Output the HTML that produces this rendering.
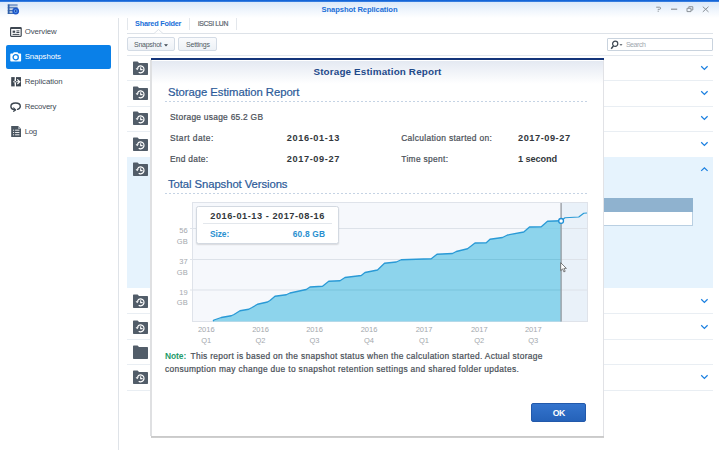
<!DOCTYPE html>
<html>
<head>
<meta charset="utf-8">
<title>Snapshot Replication</title>
<style>
*{box-sizing:border-box;margin:0;padding:0}
html,body{width:719px;height:460px;overflow:hidden;background:#fff}
body{font-family:"Liberation Sans",sans-serif;font-size:8px;color:#505a64;position:relative}
.abs{position:absolute}
.t{position:absolute;white-space:nowrap;line-height:10px;height:10px}
.b{font-weight:bold}
#topbar{left:0;top:0;width:719px;height:1.8px;background:linear-gradient(#1263d6 0,#1768da 65%,#7eaeea 100%)}
#titlebar{left:0;top:1.5px;width:719px;height:16.5px;background:linear-gradient(#dbe9f9,#f2f7fd 60%,#fff)}
#wtitle{left:0;width:719px;text-align:center;top:4.5px;color:#1a6fd8;font-weight:bold}
#vsep{left:118px;top:18px;width:1px;height:432px;background:#dfe3e8}
.side{left:24.7px;color:#414b55}
#sel{left:6px;top:44.5px;width:105px;height:24.5px;background:#0a80e8;border-radius:2px}
.tabsep{width:1px;top:18px;height:12px;background:#e3e7ec}
#tabline{left:127px;top:32.6px;width:586px;height:1px;background:#dde2e8}
.btn{height:13.5px;top:37.4px;border:1px solid #d3dbe5;border-radius:2px;background:linear-gradient(#fafbfd,#edf1f6)}
#tbline{left:127px;top:55px;width:586px;height:1px;background:#e3e8ee}
.rowsep{left:127px;width:586px;height:1px;background:#e9eef3}
#expanded{left:127px;top:156.5px;width:586px;height:131.9px;background:#e6f3fd}
.chev{left:700px;width:9px;height:6px}
.ico{left:133px;width:15px;height:14px}
#dlgshadow{left:150.2px;top:60.4px;width:1.9px;height:376px;background:#dfe0e2}
#dlgr{left:603.4px;top:60px;width:0.9px;height:376px;background:#e1e2e6}
#dlgb{left:151px;top:435.9px;width:453.2px;height:2.2px;background:linear-gradient(#dedede,#b2b2b2 55%,#f2f2f2)}
#dlg{left:152px;top:58.4px;width:451.5px;height:377.6px;background:#fff}
#dlgtop{left:151.2px;top:58.4px;width:452.6px;height:2px;background:#14357a}
#dlghead{left:152px;top:60.8px;width:451.5px;height:23px;background:linear-gradient(#e4e9f2,#fff)}
.dash{height:1px;background:repeating-linear-gradient(90deg,#c5d3e4 0,#c5d3e4 2px,transparent 2px,transparent 4px)}
.sec{color:#2b5a99;-webkit-text-stroke:0.2px #2b5a99;line-height:14px;height:14px}
.lbl{color:#4a5058;-webkit-text-stroke:0.22px #4a5058}
.val{color:#32373c;font-weight:bold}
.ax{color:#a3a8ad;font-size:7.5px;text-align:center;width:30px}
#okbtn{left:531.4px;top:403px;width:54.5px;height:18.6px;background:linear-gradient(#3474cd,#2562b9);border:1px solid #2259ab;border-radius:2px;color:#fff;font-weight:bold;text-align:center;font-size:8.7px;letter-spacing:-0.6px;line-height:18.2px}
</style>
</head>
<body>
<div class="abs" id="titlebar"></div>
<div class="abs" id="topbar"></div>
<div class="t" id="wtitle"><span id="wtitle_s" style="font-size:7.6px;letter-spacing:-0.086px;">Snapshot Replication</span></div>
<div class="abs" id="vsep"></div>
<div class="abs" id="sel"></div>
<div class="t side" id="s1" style="top:26.5px;font-size:7.8px;letter-spacing:-0.071px;">Overview</div>
<div class="t side" id="s2" style="top:51.9px;color:#fff;font-size:7.8px;letter-spacing:-0.07px;">Snapshots</div>
<div class="t side" id="s3" style="top:76.5px;font-size:7.8px;letter-spacing:-0.068px;">Replication</div>
<div class="t side" id="s4" style="top:101.5px;font-size:7.8px;letter-spacing:-0.177px;">Recovery</div>
<div class="t side" id="s5" style="top:126.6px;font-size:7.8px;letter-spacing:-0.358px;">Log</div>
<svg class="abs" style="left:7px;top:4px" width="13" height="11" viewBox="7 4 13 11"><rect x="7.8" y="4.5" width="9.8" height="9.4" fill="#c9d4e6"/><path d="M7.8,5H17.6M7.8,7.8H17.6M7.8,10.6H17.6M7.8,13.4H17.6" stroke="#3f6fb4" stroke-width="1.1"/><rect x="7.8" y="4.5" width="1.7" height="9.4" fill="#2f5fa8"/><circle cx="15.7" cy="11.1" r="3.4" fill="#1d55c8"/><circle cx="15.7" cy="11.1" r="1.9" fill="#5a98ec"/><path d="M15.1,9.9L16.9,11.1L15.1,12.3Z" fill="#0f2f8a"/></svg>
<svg class="abs" style="left:10px;top:27px" width="12" height="10" viewBox="0 0 12 10"><rect x="0.6" y="0.6" width="10.6" height="8.8" rx="0.8" fill="#fff" stroke="#3f4852" stroke-width="1.2"/><path d="M0.6,1.4H11.2" stroke="#3f4852" stroke-width="1.2"/><rect x="2.6" y="3.6" width="2.6" height="2.2" fill="#3f4852"/><path d="M6.4,3.9H9.4M6.4,5.5H9.4M2.6,7.4H9.4" stroke="#3f4852" stroke-width="1"/></svg>
<svg class="abs" style="left:10px;top:52px" width="12" height="10" viewBox="0 0 12 10"><path d="M0.3,2.2Q0.3,1.5 1,1.5H2.9L3.8,0.3H7.6L8.5,1.5H10.4Q11.1,1.5 11.1,2.2V8.7Q11.1,9.4 10.4,9.4H1Q0.3,9.4 0.3,8.7Z" fill="#fff"/><circle cx="5.7" cy="5.2" r="2.6" fill="none" stroke="#0a80e8" stroke-width="1.3"/></svg>
<svg class="abs" style="left:10.7px;top:77px" width="10.4" height="9.6" viewBox="0 0 10.4 9.6"><rect x="0.2" y="0.1" width="3.5" height="9.3" fill="#3f4852"/><rect x="5" y="0.1" width="5.2" height="9.3" fill="#3f4852"/><path d="M3.7,2.3H5V7.2H3.7Z" fill="#fff"/><path d="M2.2,4.75H8.4M6.3,2.4L8.8,4.75L6.3,7.1" fill="none" stroke="#fff" stroke-width="1.15"/><path d="M3.5,4.75H5.2" stroke="#3f4852" stroke-width="1.1"/></svg>
<svg class="abs" style="left:10px;top:102px" width="12" height="10" viewBox="0 0 12 10"><path d="M4.6,7.6Q0.9,7.4 0.9,4.3Q0.9,1 5.6,1Q10.3,1 10.3,4.3Q10.3,6.6 7.6,7.4" fill="none" stroke="#3c4650" stroke-width="1.4" stroke-linecap="round"/><path d="M3.3,5.6L5.6,7.9L3.2,9.6" fill="none" stroke="#3c4650" stroke-width="1.2" stroke-linejoin="round"/></svg>
<svg class="abs" style="left:10.8px;top:126px" width="10.4" height="11" viewBox="0 0 10.4 11"><path d="M0.2,0H7.2L10.2,2.9V10.9H0.2Z" fill="#4a5560"/><path d="M7.2,0V2.9H10.2Z" fill="#a9b0b8"/><path d="M2,4.2H3.1M4.1,4.2H8.4M2,6.5H3.1M4.1,6.5H8.4M2,8.8H3.1M4.1,8.8H8.4" stroke="#fff" stroke-width="0.9"/></svg>
<div class="abs tabsep" style="left:126.6px"></div>
<div class="abs tabsep" style="left:189.1px"></div>
<div class="abs tabsep" style="left:236px"></div>
<div class="t b" id="tab1" style="left:135px;top:19.1px;color:#1a6fd8;font-size:7.3px;letter-spacing:-0.222px;">Shared Folder</div>
<div class="t" id="tab2" style="left:198px;top:19.1px;color:#5a646e;-webkit-text-stroke:0.2px #5a646e;font-size:6.8px;letter-spacing:-0.32px;">iSCSI LUN</div>
<div class="abs" id="tabline"></div>
<svg class="abs" style="left:153.5px;top:29.1px" width="9" height="5" viewBox="0 0 9 5"><path d="M0,4.5L4.5,0.5L9,4.5" fill="#fff" stroke="#dde2e8" stroke-width="1"/></svg>
<div class="abs btn" style="left:126.6px;width:48px"></div>
<div class="abs btn" style="left:178.4px;width:39px"></div>
<div class="t" id="bt1" style="left:134px;top:39.7px;font-size:7px;letter-spacing:-0.256px;">Snapshot</div>
<svg class="abs" style="left:163.9px;top:43.6px" width="4" height="3" viewBox="0 0 4 3"><path d="M0,0.3H4L2,2.6Z" fill="#3c4650"/></svg>
<div class="t" id="bt2" style="left:185.9px;top:39.7px;font-size:7px;letter-spacing:-0.157px;">Settings</div>
<div class="abs" id="tbline"></div>
<div class="abs" id="expanded"></div>
<div class="abs rowsep" style="top:80.3px"></div>
<div class="abs rowsep" style="top:105.5px"></div>
<div class="abs rowsep" style="top:131px"></div>
<div class="abs rowsep" style="top:313.2px"></div>
<div class="abs rowsep" style="top:338.6px"></div>
<div class="abs rowsep" style="top:364px"></div>
<div class="abs rowsep" style="top:389.5px"></div>
<svg class="abs ico" style="top:60.8px" viewBox="0 0 15 14"><path d="M0,1.2Q0,0.5 0.7,0.5H4.6L6,2H14.3Q15,2 15,2.7V13.3Q15,14 14.3,14H0.7Q0,14 0,13.3Z" fill="#525d69"/><circle cx="7.6" cy="8.4" r="3.35" fill="none" stroke="#fff" stroke-width="1.25" stroke-dasharray="16.4 4.65" transform="rotate(198 7.6 8.4)"/><path d="M7.7,6.3V8.6H9.6" stroke="#fff" stroke-width="1.1" fill="none"/><path d="M2.6,7.3L4.2,9.3L5.8,7.3Z" fill="#fff"/></svg>
<svg class="abs chev" style="top:64.8px" viewBox="0 0 9 6"><path d="M1.2,1.3L4.4,4.4L7.6,1.3" fill="none" stroke="#1a7fe0" stroke-width="1.25"/></svg>
<svg class="abs ico" style="top:86.1px" viewBox="0 0 15 14"><path d="M0,1.2Q0,0.5 0.7,0.5H4.6L6,2H14.3Q15,2 15,2.7V13.3Q15,14 14.3,14H0.7Q0,14 0,13.3Z" fill="#525d69"/><circle cx="7.6" cy="8.4" r="3.35" fill="none" stroke="#fff" stroke-width="1.25" stroke-dasharray="16.4 4.65" transform="rotate(198 7.6 8.4)"/><path d="M7.7,6.3V8.6H9.6" stroke="#fff" stroke-width="1.1" fill="none"/><path d="M2.6,7.3L4.2,9.3L5.8,7.3Z" fill="#fff"/></svg>
<svg class="abs chev" style="top:90.1px" viewBox="0 0 9 6"><path d="M1.2,1.3L4.4,4.4L7.6,1.3" fill="none" stroke="#1a7fe0" stroke-width="1.25"/></svg>
<svg class="abs ico" style="top:111.4px" viewBox="0 0 15 14"><path d="M0,1.2Q0,0.5 0.7,0.5H4.6L6,2H14.3Q15,2 15,2.7V13.3Q15,14 14.3,14H0.7Q0,14 0,13.3Z" fill="#525d69"/><circle cx="7.6" cy="8.4" r="3.35" fill="none" stroke="#fff" stroke-width="1.25" stroke-dasharray="16.4 4.65" transform="rotate(198 7.6 8.4)"/><path d="M7.7,6.3V8.6H9.6" stroke="#fff" stroke-width="1.1" fill="none"/><path d="M2.6,7.3L4.2,9.3L5.8,7.3Z" fill="#fff"/></svg>
<svg class="abs chev" style="top:115.4px" viewBox="0 0 9 6"><path d="M1.2,1.3L4.4,4.4L7.6,1.3" fill="none" stroke="#1a7fe0" stroke-width="1.25"/></svg>
<svg class="abs ico" style="top:136.6px" viewBox="0 0 15 14"><path d="M0,1.2Q0,0.5 0.7,0.5H4.6L6,2H14.3Q15,2 15,2.7V13.3Q15,14 14.3,14H0.7Q0,14 0,13.3Z" fill="#525d69"/><circle cx="7.6" cy="8.4" r="3.35" fill="none" stroke="#fff" stroke-width="1.25" stroke-dasharray="16.4 4.65" transform="rotate(198 7.6 8.4)"/><path d="M7.7,6.3V8.6H9.6" stroke="#fff" stroke-width="1.1" fill="none"/><path d="M2.6,7.3L4.2,9.3L5.8,7.3Z" fill="#fff"/></svg>
<svg class="abs chev" style="top:140.6px" viewBox="0 0 9 6"><path d="M1.2,1.3L4.4,4.4L7.6,1.3" fill="none" stroke="#1a7fe0" stroke-width="1.25"/></svg>
<svg class="abs ico" style="top:162px" viewBox="0 0 15 14"><path d="M0,1.2Q0,0.5 0.7,0.5H4.6L6,2H14.3Q15,2 15,2.7V13.3Q15,14 14.3,14H0.7Q0,14 0,13.3Z" fill="#525d69"/><circle cx="7.6" cy="8.4" r="3.35" fill="none" stroke="#fff" stroke-width="1.25" stroke-dasharray="16.4 4.65" transform="rotate(198 7.6 8.4)"/><path d="M7.7,6.3V8.6H9.6" stroke="#fff" stroke-width="1.1" fill="none"/><path d="M2.6,7.3L4.2,9.3L5.8,7.3Z" fill="#fff"/></svg>
<svg class="abs chev" style="top:166px" viewBox="0 0 9 6"><path d="M1.2,4.9L4.4,1.9L7.6,4.9" fill="none" stroke="#1a7fe0" stroke-width="1.25"/></svg>
<svg class="abs ico" style="top:294px" viewBox="0 0 15 14"><path d="M0,1.2Q0,0.5 0.7,0.5H4.6L6,2H14.3Q15,2 15,2.7V13.3Q15,14 14.3,14H0.7Q0,14 0,13.3Z" fill="#525d69"/><circle cx="7.6" cy="8.4" r="3.35" fill="none" stroke="#fff" stroke-width="1.25" stroke-dasharray="16.4 4.65" transform="rotate(198 7.6 8.4)"/><path d="M7.7,6.3V8.6H9.6" stroke="#fff" stroke-width="1.1" fill="none"/><path d="M2.6,7.3L4.2,9.3L5.8,7.3Z" fill="#fff"/></svg>
<svg class="abs chev" style="top:298px" viewBox="0 0 9 6"><path d="M1.2,1.3L4.4,4.4L7.6,1.3" fill="none" stroke="#1a7fe0" stroke-width="1.25"/></svg>
<svg class="abs ico" style="top:319.5px" viewBox="0 0 15 14"><path d="M0,1.2Q0,0.5 0.7,0.5H4.6L6,2H14.3Q15,2 15,2.7V13.3Q15,14 14.3,14H0.7Q0,14 0,13.3Z" fill="#525d69"/><circle cx="7.6" cy="8.4" r="3.35" fill="none" stroke="#fff" stroke-width="1.25" stroke-dasharray="16.4 4.65" transform="rotate(198 7.6 8.4)"/><path d="M7.7,6.3V8.6H9.6" stroke="#fff" stroke-width="1.1" fill="none"/><path d="M2.6,7.3L4.2,9.3L5.8,7.3Z" fill="#fff"/></svg>
<svg class="abs chev" style="top:323.5px" viewBox="0 0 9 6"><path d="M1.2,1.3L4.4,4.4L7.6,1.3" fill="none" stroke="#1a7fe0" stroke-width="1.25"/></svg>
<svg class="abs ico" style="top:344.5px" viewBox="0 0 15 14"><path d="M0,1.2Q0,0.5 0.7,0.5H4.6L6,2H14.3Q15,2 15,2.7V13.3Q15,14 14.3,14H0.7Q0,14 0,13.3Z" fill="#525d69"/></svg>
<svg class="abs ico" style="top:370px" viewBox="0 0 15 14"><path d="M0,1.2Q0,0.5 0.7,0.5H4.6L6,2H14.3Q15,2 15,2.7V13.3Q15,14 14.3,14H0.7Q0,14 0,13.3Z" fill="#525d69"/><circle cx="7.6" cy="8.4" r="3.35" fill="none" stroke="#fff" stroke-width="1.25" stroke-dasharray="16.4 4.65" transform="rotate(198 7.6 8.4)"/><path d="M7.7,6.3V8.6H9.6" stroke="#fff" stroke-width="1.1" fill="none"/><path d="M2.6,7.3L4.2,9.3L5.8,7.3Z" fill="#fff"/></svg>
<svg class="abs chev" style="top:374px" viewBox="0 0 9 6"><path d="M1.2,1.3L4.4,4.4L7.6,1.3" fill="none" stroke="#1a7fe0" stroke-width="1.25"/></svg>
<div class="abs" style="left:590px;top:197.5px;width:102.8px;height:14px;background:#8fb2cf"></div>
<div class="abs" style="left:590px;top:211.5px;width:102.8px;height:14.8px;background:#fff;border:1px solid #b9cfe2;border-top:none"></div>
<div class="abs" style="left:606.5px;top:37.5px;width:106px;height:13.5px;border:1px solid #c9d3de;background:#fff;border-radius:1px"></div>
<svg class="abs" style="left:610.4px;top:39.9px" width="14" height="10" viewBox="0 0 14 10"><circle cx="5.2" cy="3.8" r="2.6" fill="none" stroke="#3c4650" stroke-width="1.2"/><path d="M3.4,6L1.2,8.8" stroke="#3c4650" stroke-width="1.5"/><path d="M9.5,4.2h3l-1.5,1.6z" fill="#3c4650"/></svg>
<div class="t" id="srch" style="left:625.9px;top:40px;color:#a0a8b0;font-size:7px;letter-spacing:-0.438px;">Search</div>
<svg class="abs" id="wctl" style="left:650px;top:4px" width="64" height="11" viewBox="650 4 64 11"><g fill="none" stroke="#8a9198" stroke-width="1"><path d="M656.2,7.2H659.5Q660.6,7.2 660.6,8.2Q660.6,9.3 659.5,9.3H658.2V10.4M658.2,11.2V12"/><path d="M671,9.2H677.2" stroke-width="1.2"/><path d="M687,8.3H691V11.6H687ZM688.8,8.3V6.7H692.8V10H691"/><path d="M702.8,6.7L708.5,11.9M708.5,6.7L702.8,11.9"/></g></svg>
<div class="abs" id="dlgshadow"></div>
<div class="abs" id="dlg"></div>
<div class="abs" id="dlgb"></div>
<div class="abs" id="dlghead"></div>
<div class="abs" id="dlgr"></div>
<div class="abs" id="dlgtop"></div>
<div class="t b" id="dtitle" style="left:152px;width:451px;text-align:center;top:65.8px;color:#1f4a8a;line-height:12px;height:12px"><span id="dtitle_s" style="font-size:9.9px;letter-spacing:0.143px;">Storage Estimation Report</span></div>
<div class="t sec" id="sec1" style="left:168px;top:84.5px;font-size:11.3px;letter-spacing:-0.042px;">Storage Estimation Report</div>
<div class="abs dash" style="left:165px;top:101.3px;width:423px"></div>
<div class="t lbl" id="l1" style="left:170px;top:111.65px;font-size:8.4px;letter-spacing:0.273px;">Storage usage 65.2 GB</div>
<div class="t lbl" id="l2" style="left:170px;top:132.65px;font-size:8.4px;letter-spacing:0.461px;">Start date:</div>
<div class="t val" id="v2" style="left:286.75px;top:132.65px;font-size:9.2px;letter-spacing:0.611px;">2016-01-13</div>
<div class="t lbl" id="l3" style="left:401.25px;top:132.65px;font-size:8.4px;letter-spacing:0.325px;">Calculation started on:</div>
<div class="t val" id="v3" style="left:518px;top:132.65px;font-size:9.2px;letter-spacing:0.556px;">2017-09-27</div>
<div class="t lbl" id="l4" style="left:170px;top:153.9px;font-size:8.4px;letter-spacing:0.268px;">End date:</div>
<div class="t val" id="v4" style="left:286.75px;top:153.9px;font-size:9.2px;letter-spacing:0.611px;">2017-09-27</div>
<div class="t lbl" id="l5" style="left:401.25px;top:153.9px;font-size:8.4px;letter-spacing:0.33px;">Time spent:</div>
<div class="t val" id="v5" style="left:518px;top:153.9px;font-size:9.2px;letter-spacing:-0.118px;">1 second</div>
<div class="t sec" id="sec2" style="left:168px;top:177.3px;font-size:11.3px;letter-spacing:-0.078px;">Total Snapshot Versions</div>
<div class="abs dash" style="left:165px;top:193px;width:423px"></div>
<svg class="abs" id="chart" style="left:0;top:0" width="719" height="460" viewBox="0 0 719 460">
<defs><clipPath id="ac"><path d="M213,321 L214,320 L221.25,317.5 L231.25,315.75 L234,314.5 L240,310.75 L248.75,309.25 L252,307.5 L257.5,304.25 L267.5,302 L270,300.5 L275,296.25 L286.25,294.75 L290,293 L306.25,289.5 L310,287 L322.5,286.25 L328.75,281.25 L340,280.75 L345,277.5 L361.25,275.5 L365,272.5 L377.5,270 L384.5,263.25 L396.25,262 L401.25,259.75 L431.25,258.75 L437,254.25 L452.5,253.5 L456.25,251.5 L467.5,248.75 L475,243 L486.25,242.75 L490,239.25 L502.5,237.5 L507.5,235 L523.75,232 L529.5,227 L541.25,226.75 L547.5,221.25 L561.25,220.75 L561.25,321.5 L213,321.5 Z"/></clipPath></defs>
<rect x="192.5" y="202.5" width="395" height="119" fill="#f6f8fc" stroke="#dfe3ea" stroke-width="1"/>
<rect x="561.5" y="203" width="25.5" height="118" fill="#e9f1f9"/>
<path d="M193,228.5H587M193,259.5H587M193,290H587" stroke="#dde2e9" stroke-width="1" fill="none"/>
<path d="M190,228.5h3M190,259.5h3M190,290h3" stroke="#dfe3ea" stroke-width="1" fill="none"/>
<path d="M213,321 L214,320 L221.25,317.5 L231.25,315.75 L234,314.5 L240,310.75 L248.75,309.25 L252,307.5 L257.5,304.25 L267.5,302 L270,300.5 L275,296.25 L286.25,294.75 L290,293 L306.25,289.5 L310,287 L322.5,286.25 L328.75,281.25 L340,280.75 L345,277.5 L361.25,275.5 L365,272.5 L377.5,270 L384.5,263.25 L396.25,262 L401.25,259.75 L431.25,258.75 L437,254.25 L452.5,253.5 L456.25,251.5 L467.5,248.75 L475,243 L486.25,242.75 L490,239.25 L502.5,237.5 L507.5,235 L523.75,232 L529.5,227 L541.25,226.75 L547.5,221.25 L561.25,220.75 L561.25,321.5 L213,321.5 Z" fill="#73cbe7" fill-opacity=".8"/>
<path d="M193,259.5H561M193,290H561" stroke="#7cc5dd" stroke-width="1" fill="none" clip-path="url(#ac)" id="ingrid"/>
<path d="M213,321 L214,320 L221.25,317.5 L231.25,315.75 L234,314.5 L240,310.75 L248.75,309.25 L252,307.5 L257.5,304.25 L267.5,302 L270,300.5 L275,296.25 L286.25,294.75 L290,293 L306.25,289.5 L310,287 L322.5,286.25 L328.75,281.25 L340,280.75 L345,277.5 L361.25,275.5 L365,272.5 L377.5,270 L384.5,263.25 L396.25,262 L401.25,259.75 L431.25,258.75 L437,254.25 L452.5,253.5 L456.25,251.5 L467.5,248.75 L475,243 L486.25,242.75 L490,239.25 L502.5,237.5 L507.5,235 L523.75,232 L529.5,227 L541.25,226.75 L547.5,221.25 L561.25,220.75" fill="none" stroke="#2a9ad6" stroke-width="1.3" stroke-linejoin="round"/>
<path d="M561.25,220.75 L565,217.75 L578.75,217 L583.75,213.25 L587,213" fill="none" stroke="#2a9ad6" stroke-width="1.2" stroke-linejoin="round"/>
<rect x="560.4" y="203" width="1.4" height="118.5" fill="#9a9fa5"/>
<circle cx="561.1" cy="220.9" r="2.4" fill="#fff" stroke="#1e8fd6" stroke-width="1.3"/>
</svg>
<div class="abs" id="tip" style="left:196.2px;top:205.9px;width:142.4px;height:38.1px;background:#fff;border:1px solid #d3d9e1;border-radius:2.5px;box-shadow:0 1px 1.5px rgba(0,0,0,.13)"></div>
<div class="abs" style="left:203px;top:222.7px;width:129px;height:1px;background:#e3e7ec"></div>
<div class="t val" id="tt" style="left:210.25px;top:210.9px;font-size:9.2px;letter-spacing:0.538px;">2016-01-13 - 2017-08-16</div>
<div class="t b" id="ts" style="left:210px;top:228.65px;color:#2a8fd0;font-size:8.4px;letter-spacing:-0.078px;">Size:</div>
<div class="t b" id="tv" style="left:292.75px;top:228.65px;color:#2a8fd0;font-size:8.4px;letter-spacing:0.174px;">60.8 GB</div>
<div class="t ax" style="left:167.7px;top:226px;text-align:right;width:20px">56</div>
<div class="t ax" style="left:167.7px;top:236.75px;text-align:right;width:20px">GB</div>
<div class="t ax" style="left:167.7px;top:256.75px;text-align:right;width:20px">37</div>
<div class="t ax" style="left:167.7px;top:267.5px;text-align:right;width:20px">GB</div>
<div class="t ax" style="left:167.7px;top:287.5px;text-align:right;width:20px">19</div>
<div class="t ax" style="left:167.7px;top:298.25px;text-align:right;width:20px">GB</div>
<div class="t ax" style="left:191.25px;top:325px">2016</div>
<div class="t ax" style="left:191.25px;top:335.5px">Q1</div>
<div class="t ax" style="left:245.5px;top:325px">2016</div>
<div class="t ax" style="left:245.5px;top:335.5px">Q2</div>
<div class="t ax" style="left:299.5px;top:325px">2016</div>
<div class="t ax" style="left:299.5px;top:335.5px">Q3</div>
<div class="t ax" style="left:354px;top:325px">2016</div>
<div class="t ax" style="left:354px;top:335.5px">Q4</div>
<div class="t ax" style="left:409px;top:325px">2017</div>
<div class="t ax" style="left:409px;top:335.5px">Q1</div>
<div class="t ax" style="left:464.25px;top:325px">2017</div>
<div class="t ax" style="left:464.25px;top:335.5px">Q2</div>
<div class="t ax" style="left:518.25px;top:325px">2017</div>
<div class="t ax" style="left:518.25px;top:335.5px">Q3</div>
<div class="t b" id="n1a" style="left:165px;top:351.15px;color:#1e9a6a;font-size:8.4px;letter-spacing:-0.039px;">Note:</div>
<div class="t lbl" id="n1b" style="left:190.5px;top:351.15px;font-size:8.4px;letter-spacing:0.321px;">This report is based on the snapshot status when the calculation started. Actual storage</div>
<div class="t lbl" id="n2" style="left:165px;top:364.4px;font-size:8.4px;letter-spacing:0.341px;">consumption may change due to snapshot retention settings and shared folder updates.</div>
<svg class="abs" style="left:560px;top:262px" width="8" height="11" viewBox="0 0 8 11"><path d="M0.7,0.7V8.6L2.6,6.9L3.9,9.9L5.2,9.3L3.9,6.4H6.4Z" fill="#fff" stroke="#4a4a4a" stroke-width=".7"/></svg>
<div class="abs" id="okbtn">OK</div>
</body>
</html>
